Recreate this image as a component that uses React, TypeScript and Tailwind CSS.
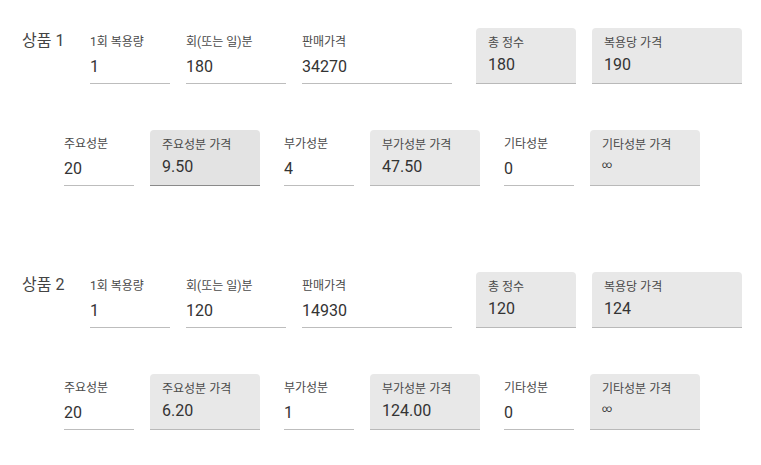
import clsx from "clsx";

type Field = {
  label: string;
  value: string;
  width: string;
  filled?: boolean;
  hovered?: boolean;
};

type Product = {
  name: string;
  top: Field[][];
  bottom: Field[][];
};

const products: Product[] = [
  {
    name: "상품 1",
    top: [
      [
        { label: "1회 복용량", value: "1", width: "w-[80px]" },
        { label: "회(또는 일)분", value: "180", width: "w-[100px]" },
        { label: "판매가격", value: "34270", width: "w-[150px]" },
      ],
      [
        { label: "총 정수", value: "180", width: "w-[100px]", filled: true },
        { label: "복용당 가격", value: "190", width: "w-[150px]", filled: true },
      ],
    ],
    bottom: [
      [
        { label: "주요성분", value: "20", width: "w-[70px]" },
        { label: "주요성분 가격", value: "9.50", width: "w-[110px]", filled: true, hovered: true },
      ],
      [
        { label: "부가성분", value: "4", width: "w-[70px]" },
        { label: "부가성분 가격", value: "47.50", width: "w-[110px]", filled: true },
      ],
      [
        { label: "기타성분", value: "0", width: "w-[70px]" },
        { label: "기타성분 가격", value: "∞", width: "w-[110px]", filled: true },
      ],
    ],
  },
  {
    name: "상품 2",
    top: [
      [
        { label: "1회 복용량", value: "1", width: "w-[80px]" },
        { label: "회(또는 일)분", value: "120", width: "w-[100px]" },
        { label: "판매가격", value: "14930", width: "w-[150px]" },
      ],
      [
        { label: "총 정수", value: "120", width: "w-[100px]", filled: true },
        { label: "복용당 가격", value: "124", width: "w-[150px]", filled: true },
      ],
    ],
    bottom: [
      [
        { label: "주요성분", value: "20", width: "w-[70px]" },
        { label: "주요성분 가격", value: "6.20", width: "w-[110px]", filled: true },
      ],
      [
        { label: "부가성분", value: "1", width: "w-[70px]" },
        { label: "부가성분 가격", value: "124.00", width: "w-[110px]", filled: true },
      ],
      [
        { label: "기타성분", value: "0", width: "w-[70px]" },
        { label: "기타성분 가격", value: "∞", width: "w-[110px]", filled: true },
      ],
    ],
  },
];

function TextField({ field }: { field: Field }) {
  if (field.filled) {
    const infinite = field.value === "∞";
    return (
      <div
        className={clsx(
          "flex h-14 flex-col rounded-t-[4px] border-b px-3 pt-[7px]",
          field.width,
          field.hovered ? "border-[#8a8a8a] bg-[#e3e3e3]" : "border-[#b9b9b9] bg-[#e8e8e8]"
        )}
      >
        <span className="text-xs leading-4 text-[#4a4a4a]">{field.label}</span>
        <span
          className={clsx(
            "text-[#333]",
            infinite ? "mt-[3px] text-[10px] leading-[18px]" : "mt-[2px] text-base leading-6"
          )}
        >
          {field.value}
        </span>
      </div>
    );
  }

  return (
    <div className={clsx("flex h-14 flex-col border-b border-[#bdbdbd] pt-[6px]", field.width)}>
      <span className="text-xs leading-4 text-[#4a4a4a]">{field.label}</span>
      <span className="mt-[5px] text-base leading-6 text-[#333]">{field.value}</span>
    </div>
  );
}

function FieldGroup({ fields }: { fields: Field[] }) {
  return (
    <div className="flex gap-4">
      {fields.map((field) => (
        <TextField key={field.label} field={field} />
      ))}
    </div>
  );
}

export default function App() {
  return (
    <div className="h-[465px] w-[761px] overflow-hidden bg-white pt-7 font-['Roboto','Noto_Sans_CJK_KR',sans-serif]">
      {products.map((product, index) => (
        <section key={product.name} className={clsx(index > 0 && "mt-[86px]")}>
          <div className="flex items-start pl-[22px]">
            <h2 className="w-[68px] pt-px text-base leading-6 font-normal text-[#444]">
              {product.name}
            </h2>
            <div className="flex gap-6">
              {product.top.map((group, i) => (
                <FieldGroup key={i} fields={group} />
              ))}
            </div>
          </div>

          <div className="mt-[46px] flex gap-6 pl-16">
            {product.bottom.map((group, i) => (
              <FieldGroup key={i} fields={group} />
            ))}
          </div>
        </section>
      ))}
    </div>
  );
}
